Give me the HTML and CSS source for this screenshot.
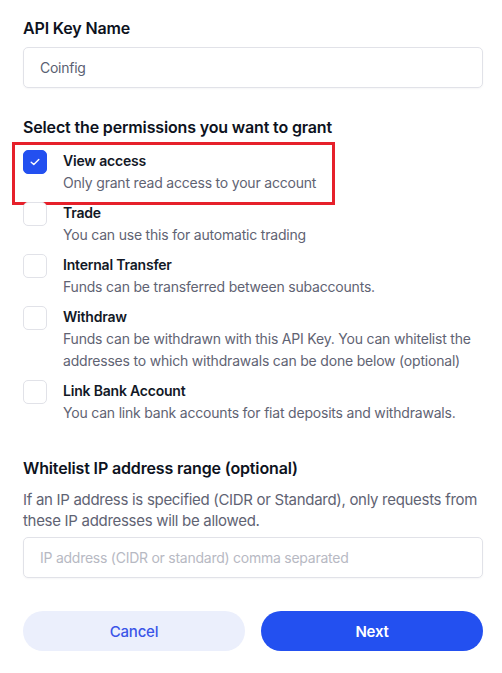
FILE: index.html
```html
<!DOCTYPE html>
<html lang="en">
<head>
<meta charset="utf-8">
<title>API Key</title>
<link rel="stylesheet" href="styles.css">
</head>
<body>
<main class="form">
  <section class="field">
    <h2 class="label">API Key Name</h2>
    <div class="input"><span class="value">Coinfig</span></div>
  </section>

  <section class="perms">
    <h2 class="label">Select the permissions you want to grant</h2>
    <ul class="perm-list">
      <li class="perm highlighted">
        <span class="box checked">
          <svg viewBox="0 0 10 8" width="10" height="8"><path d="M1.2 4.2 L3.8 6.6 L8.8 1.4" fill="none" stroke="#fff" stroke-width="1.4" stroke-linecap="round" stroke-linejoin="round"/></svg>
        </span>
        <div class="perm-text">
          <div class="perm-title">View access</div>
          <div class="perm-desc">Only grant read access to your account</div>
        </div>
      </li>
      <li class="perm">
        <span class="box"></span>
        <div class="perm-text">
          <div class="perm-title">Trade</div>
          <div class="perm-desc">You can use this for automatic trading</div>
        </div>
      </li>
      <li class="perm">
        <span class="box"></span>
        <div class="perm-text">
          <div class="perm-title">Internal Transfer</div>
          <div class="perm-desc">Funds can be transferred between subaccounts.</div>
        </div>
      </li>
      <li class="perm">
        <span class="box"></span>
        <div class="perm-text">
          <div class="perm-title">Withdraw</div>
          <div class="perm-desc">Funds can be withdrawn with this API Key. You can whitelist the addresses to which withdrawals can be done below (optional)</div>
        </div>
      </li>
      <li class="perm">
        <span class="box"></span>
        <div class="perm-text">
          <div class="perm-title">Link Bank Account</div>
          <div class="perm-desc">You can link bank accounts for fiat deposits and withdrawals.</div>
        </div>
      </li>
    </ul>
  </section>

  <section class="whitelist">
    <h2 class="label">Whitelist IP address range (optional)</h2>
    <p class="hint">If an IP address is specified (CIDR or Standard), only requests from these IP addresses will be allowed.</p>
    <div class="input"><span class="placeholder">IP address (CIDR or standard) comma separated</span></div>
  </section>

  <div class="actions">
    <button class="btn btn-secondary">Cancel</button>
    <button class="btn btn-primary">Next</button>
  </div>
</main>
</body>
</html>
```

FILE: styles.css
```css
* { box-sizing: border-box; }

html, body {
  margin: 0;
  padding: 0;
  background: #ffffff;
}

body {
  font-family: Inter, "Noto Sans", "Liberation Sans", sans-serif;
  color: #121826;
}

.form {
  width: 502px;
  padding: 17px 19px 0 23px;
}

.label {
  margin: 0;
  font-size: 16px;
  font-weight: 600;
  line-height: 22px;
  color: #0d1220;
  letter-spacing: -0.15px;
}

.input {
  height: 41px;
  border: 1px solid #e1e2e8;
  border-radius: 5px;
  display: flex;
  align-items: center;
  padding: 0 16px;
  font-size: 14px;
  letter-spacing: -0.25px;
  box-shadow: 0 1px 2px rgba(20, 25, 40, 0.04);
}

.field .input { margin-top: 8px; }

.value { color: #5a5f72; }
.placeholder { color: #b7b9c3; }

.perms { margin-top: 28px; }

.perm-list {
  list-style: none;
  margin: 12px 0 0;
  padding: 0;
  display: flex;
  flex-direction: column;
  gap: 8px;
}

.perm {
  display: flex;
  align-items: flex-start;
  gap: 16px;
  position: relative;
}

.perm.highlighted::before {
  content: "";
  position: absolute;
  left: -11px;
  top: -8px;
  width: 317px;
  height: 57px;
  border: 3px solid #e6202a;
  pointer-events: none;
}

.box {
  flex: 0 0 24px;
  width: 24px;
  height: 24px;
  border: 1px solid #e1e2e8;
  border-radius: 5px;
  display: flex;
  align-items: center;
  justify-content: center;
  background: #fff;
}

.box.checked {
  background: #2350f0;
  border-color: #2350f0;
}

.perm-text {
  font-size: 14px;
  line-height: 22px;
  letter-spacing: -0.2px;
}

.perm-title {
  font-weight: 600;
  color: #121826;
}

.perm-desc {
  color: #5f6373;
}

.whitelist { margin-top: 33px; }

.hint {
  margin: 10px 0 0;
  font-size: 15px;
  line-height: 21px;
  letter-spacing: -0.3px;
  color: #5f6373;
}

.whitelist .input { margin-top: 6px; }

.actions {
  margin-top: 33px;
  display: flex;
  gap: 16px;
}

.btn {
  flex: 1;
  height: 40px;
  border: none;
  border-radius: 20px;
  font-family: inherit;
  font-size: 15px;
  font-weight: 500;
  letter-spacing: -0.2px;
}

.btn-secondary {
  background: #ebeffc;
  color: #3a55e8;
}

.btn-primary {
  background: #2350f0;
  color: #ffffff;
  font-weight: 600;
}
```
